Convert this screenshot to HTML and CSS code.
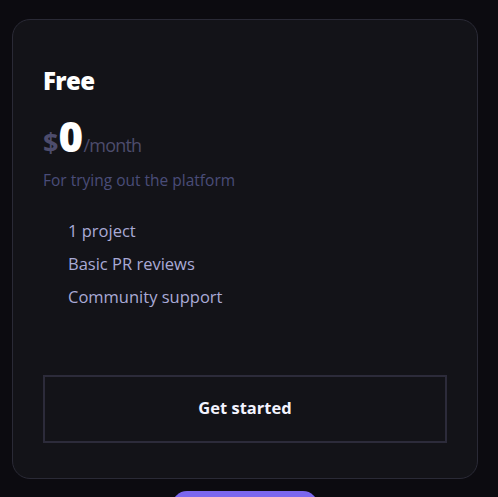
FILE: index.html
```html
<!DOCTYPE html>
<html lang="en">
<head>
<meta charset="utf-8">
<link rel="stylesheet" href="styles.css">
</head>
<body>
<div class="page">
  <div class="card">
    <h2 class="title">Free</h2>
    <div class="price"><span class="cur">$</span><span class="amt">0</span><span class="per">/month</span></div>
    <p class="desc">For trying out the platform</p>
    <ul class="features">
      <li>1 project</li>
      <li>Basic PR reviews</li>
      <li>Community support</li>
    </ul>
    <button class="cta">Get started</button>
  </div>
  <div class="next"><span class="pill"></span></div>
</div>
</body>
</html>
```
FILE: styles.css
```css
* { box-sizing: border-box; }
html, body { margin: 0; padding: 0; }
body {
  background: #0c0b10;
  font-family: "Open Sans", "Noto Sans", sans-serif;
  overflow: hidden;
  height: 497px;
}
.page {
  padding: 19px 20px 0 12px;
}
.card {
  width: 466px;
  height: 460px;
  background: #131318;
  border: 1px solid #2a2a36;
  border-radius: 18px;
  padding: 45px 30px 35px 30px;
  display: flex;
  flex-direction: column;
}
.title {
  margin: 0;
  color: #ffffff;
  font-size: 24px;
  font-weight: 800;
  line-height: 32px;
  letter-spacing: -0.6px;
}
.price {
  margin-top: 17px;
  display: flex;
  align-items: baseline;
  line-height: 44px;
}
.cur { color: #4d4c6c; font-size: 27px; font-weight: 700; }
.amt { color: #ffffff; font-size: 42px; font-weight: 800; letter-spacing: -0.5px; }
.per { color: #4d4c6c; font-size: 18px; letter-spacing: -0.8px; margin-left: 1px; }
.desc {
  margin: 3px 0 0 0;
  color: #4a4d78;
  font-size: 15.5px;
  line-height: 20px;
}
.features {
  list-style: none;
  margin: 24px 0 0 0;
  padding: 0 0 0 25px;
}
.features li {
  color: #a9aad6;
  font-size: 16.5px;
  line-height: 33px;
}
.cta {
  margin-top: auto;
  height: 68px;
  width: 100%;
  padding: 0 0 3px 0;
  background: #131318;
  border: 2px solid #2c2b3a;
  border-radius: 0;
  color: #f4f4ff;
  font-family: inherit;
  font-size: 16.5px;
  font-weight: 700;
}
.next {
  display: flex;
  justify-content: center;
  padding-top: 12px;
}
.pill {
  display: block;
  width: 146px;
  height: 30px;
  border-radius: 16px;
  background: #7b67ef;
}
```
